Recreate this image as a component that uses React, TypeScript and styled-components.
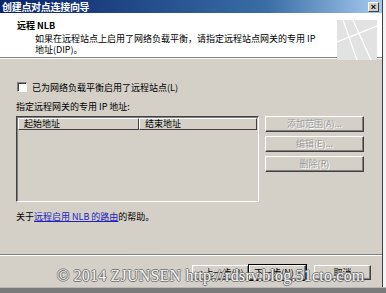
import React from "react";
import styled, { createGlobalStyle } from "styled-components";

const GlobalStyle = createGlobalStyle`
  html, body {
    margin: 0;
    padding: 0;
    background: #6f6f6f;
  }
  body {
    font-family: "Noto Sans CJK SC", "Liberation Sans", sans-serif;
    font-size: 9px;
    color: #000;
  }
`;

const Screen = styled.div`
  width: 386px;
  height: 293px;
  background: linear-gradient(#f4f4f4 0, #f4f4f4 287px, #7a7a7a 288px);
  position: relative;
  overflow: hidden;
`;

const Window = styled.div`
  width: 383px;
  height: 287px;
  background: #d4d0c8;
  border-right: 1px solid #404040;
  box-sizing: border-box;
  display: flex;
  flex-direction: column;
`;

const TitleBar = styled.div`
  height: 13px;
  background: linear-gradient(90deg, #0a246a 0%, #3a6ea5 70%, #a6caf0 100%);
  display: flex;
  align-items: center;
  justify-content: space-between;
  padding: 0 3px 0 2px;
`;

const Title = styled.span`
  color: #fff;
  font-weight: bold;
  font-size: 10px;
  line-height: 13px;
  letter-spacing: -0.3px;
`;

const CloseBox = styled.div`
  width: 11px;
  height: 10px;
  background: #d4d0c8;
  border: 1px solid;
  border-color: #fff #404040 #404040 #fff;
  box-sizing: border-box;
  display: flex;
  align-items: center;
  justify-content: center;
  font-size: 9px;
  font-weight: bold;
  line-height: 8px;
  font-family: "Liberation Sans", sans-serif;
`;

const Header = styled.div`
  height: 45px;
  background: #fff;
  border-bottom: 1px solid #808080;
  box-shadow: 0 1px 0 #fff;
  display: flex;
  justify-content: space-between;
  padding: 7px 5px 0 17px;
  box-sizing: border-box;
`;

const HeaderText = styled.div`
  display: flex;
  flex-direction: column;
`;

const HeaderTitle = styled.div`
  font-weight: bold;
  font-size: 9px;
  line-height: 12px;
`;

const HeaderDesc = styled.div`
  padding-left: 18px;
  width: 290px;
  line-height: 11px;
  margin-top: 1px;
`;

const Body = styled.div`
  flex: 1;
  padding: 23px 16px 0 16px;
  display: flex;
  flex-direction: column;
`;

const CheckRow = styled.label`
  display: flex;
  align-items: center;
  gap: 5px;
  height: 12px;
`;

const CheckBox = styled.span`
  width: 8px;
  height: 8px;
  margin-left: 1px;
  background: #fff;
  border: 1px solid;
  border-color: #808080 #fff #fff #808080;
  box-shadow: inset 1px 1px 0 #404040;
`;

const FieldLabel = styled.div`
  margin-top: 8px;
  line-height: 12px;
`;

const ListArea = styled.div`
  display: flex;
  gap: 4px;
  margin-top: 3px;
`;

const ListBox = styled.div`
  width: 243px;
  height: 86px;
  background: #d4d0c8;
  border: 1px solid;
  border-color: #404040 #fff #fff #404040;
  box-sizing: border-box;
  box-shadow: inset 1px 1px 0 #808080;
`;

const ListHeader = styled.div`
  display: flex;
  height: 12px;
  margin: 1px 0 0 1px;
`;

const Column = styled.div<{ $w: number }>`
  width: ${p => p.$w}px;
  height: 12px;
  box-sizing: border-box;
  border: 1px solid;
  border-color: #fff #404040 #404040 #fff;
  padding-left: 5px;
  line-height: 10px;
`;

const SideButtons = styled.div`
  display: flex;
  flex-direction: column;
  gap: 4px;
  padding-left: 2px;
`;

const Button = styled.button<{ $w?: number; $h?: number; $focus?: boolean }>`
  width: ${p => p.$w ?? 99}px;
  height: ${p => p.$h ?? 16}px;
  padding: 0;
  background: #d4d0c8;
  border: 1px solid;
  border-color: #fff #404040 #404040 #fff;
  box-shadow: inset -1px -1px 0 #808080;
  font-family: "Noto Sans CJK SC", "Liberation Sans", sans-serif;
  font-size: 9px;
  line-height: 12px;
  color: #000;
  outline: ${p => (p.$focus ? "1px solid #000" : "none")};
  &:disabled {
    color: #9a9a9a;
    text-shadow: 1px 1px 0 #fff;
  }
`;

const HelpLine = styled.div`
  margin-top: 9px;
  line-height: 12px;
`;

const HelpLink = styled.a`
  color: #2020c0;
  text-decoration: underline;
`;

const Footer = styled.div`
  height: 33px;
  border-top: 1px solid #808080;
  box-shadow: inset 0 1px 0 #fff;
  display: flex;
  justify-content: flex-end;
  align-items: flex-start;
  padding: 10px 11px 0 0;
  box-sizing: border-box;
`;

const NavGroup = styled.div`
  display: flex;
  margin-right: 8px;
`;

const Watermark = styled.div`
  position: absolute;
  left: 57px;
  top: 267px;
  font-family: "Liberation Serif", serif;
  font-size: 16px;
  letter-spacing: 0.2px;
  color: #f4f4f4;
  text-shadow: 1px 0 0 #777, -1px 0 0 #777, 0 1px 0 #777, 0 -1px 0 #777;
  white-space: nowrap;
  pointer-events: none;
`;

const Banner = () => (
  <svg width="40" height="40" viewBox="0 0 40 40">
    <rect width="40" height="40" fill="#e2e2e2" />
    <path d="M6 0 L20 40 M16 0 L34 40 M0 22 L40 6" stroke="#fff" strokeWidth="1.2" fill="none" />
  </svg>
);

export default function App() {
  return (
    <Screen>
      <GlobalStyle />
      <Window>
        <TitleBar>
          <Title>创建点对点连接向导</Title>
          <CloseBox>×</CloseBox>
        </TitleBar>
        <Header>
          <HeaderText>
            <HeaderTitle>远程 NLB</HeaderTitle>
            <HeaderDesc>
              如果在远程站点上启用了网络负载平衡，请指定远程站点网关的专用 IP 地址(DIP)。
            </HeaderDesc>
          </HeaderText>
          <Banner />
        </Header>
        <Body>
          <CheckRow>
            <CheckBox />
            <span>已为网络负载平衡启用了远程站点(L)</span>
          </CheckRow>
          <FieldLabel>指定远程网关的专用 IP 地址:</FieldLabel>
          <ListArea>
            <ListBox>
              <ListHeader>
                <Column $w={121}>起始地址</Column>
                <Column $w={118}>结束地址</Column>
              </ListHeader>
            </ListBox>
            <SideButtons>
              <Button disabled>添加范围(A)...</Button>
              <Button disabled>编辑(E)...</Button>
              <Button disabled>删除(R)</Button>
            </SideButtons>
          </ListArea>
          <HelpLine>
            关于<HelpLink>远程启用 NLB 的路由</HelpLink>的帮助。
          </HelpLine>
        </Body>
        <Footer>
          <NavGroup>
            <Button $w={57} $h={15}>&lt; 上一步(B)</Button>
            <Button $w={57} $h={15} $focus>下一步(N) &gt;</Button>
          </NavGroup>
          <Button $w={57} $h={15}>取消</Button>
        </Footer>
      </Window>
      <Watermark>© 2014 ZJUNSEN http://rdsrv.blog.51cto.com</Watermark>
    </Screen>
  );
}
